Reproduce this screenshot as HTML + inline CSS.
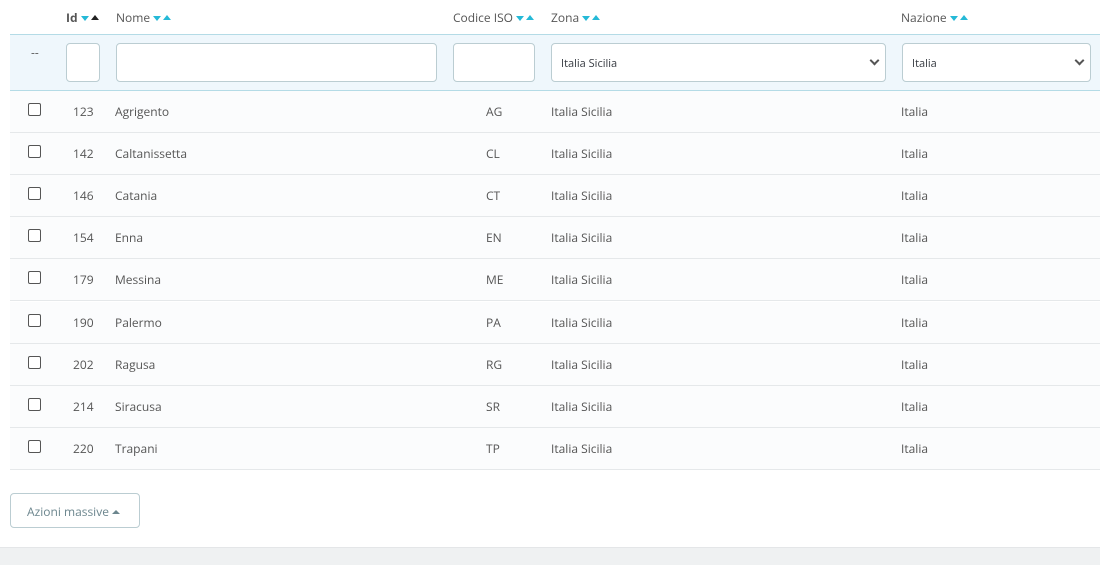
<!DOCTYPE html>
<html><head><style>
*{margin:0;padding:0;box-sizing:border-box}
body{width:1100px;height:565px;background:#fff;font-family:"Open Sans","Liberation Sans",sans-serif;font-size:12px;color:#555;position:relative;overflow:hidden}
.a{position:absolute}
.h{top:9px;font-size:12px;color:#555}
.dn{display:inline-block;width:0;height:0;border-left:4px solid transparent;border-right:4px solid transparent;border-top:5px solid #25b9d7;vertical-align:1px;margin-left:3px}
.up{display:inline-block;width:0;height:0;border-left:4px solid transparent;border-right:4px solid transparent;border-bottom:5px solid #25b9d7;vertical-align:2px;margin-left:2px}
.filt{left:10px;top:34px;width:1090px;height:57px;background:#eff7fc;border-top:1px solid #b4dbe6;border-bottom:1px solid #b4dbe6}
.in{top:43px;height:39px;background:#fff;border:1px solid #bbcdd2;border-radius:4px}
.sel{font-size:11px;color:#363a41;padding:12px 0 0 9px}
.chev{position:absolute;right:7px;top:13px;width:7px;height:7px;border-right:2px solid #555;border-bottom:2px solid #555;transform:rotate(45deg)}
.row{left:10px;width:1090px;height:42px;background:#fbfcfd;border-bottom:1px solid #e5e8ea}
.row span{position:absolute;top:12px}
.cb{position:absolute;left:18px;top:12px;width:13px;height:13px;border:1px solid #555;border-radius:2px;background:#fff}
</style></head><body>
<div class="a h" style="left:66px;font-weight:bold">Id<span class="dn"></span><span class="up" style="border-bottom-color:#222"></span></div>
<div class="a h" style="left:116px">Nome<span class="dn"></span><span class="up"></span></div>
<div class="a h" style="left:453px">Codice ISO<span class="dn"></span><span class="up"></span></div>
<div class="a h" style="left:551px">Zona<span class="dn"></span><span class="up"></span></div>
<div class="a h" style="left:901px">Nazione<span class="dn"></span><span class="up"></span></div>
<div class="a filt"></div>
<div class="a" style="left:31px;top:44px;color:#555">--</div>
<div class="a in" style="left:66px;width:34px"></div>
<div class="a in" style="left:116px;width:321px"></div>
<div class="a in" style="left:453px;width:82px"></div>
<div class="a in sel" style="left:551px;width:335px">Italia Sicilia<div class="chev"></div></div>
<div class="a in sel" style="left:902px;width:189px">Italia<div class="chev"></div></div>
<div id="rows"></div>
<div class="a" style="left:10px;top:493px;width:130px;height:35px;border:1px solid #bbcdd2;border-radius:4px;color:#6c868e;font-size:12px;padding:9px 0 0 16px">Azioni massive <span style="display:inline-block;border-left:4px solid transparent;border-right:4px solid transparent;border-bottom:4px solid #6c868e;vertical-align:2px"></span></div>
<div class="a" style="left:0;top:547px;width:1100px;height:18px;background:#eff1f2;border-top:1px solid #e4e6e8"></div>
<script>
var d=[["123","Agrigento","AG"],["142","Caltanissetta","CL"],["146","Catania","CT"],["154","Enna","EN"],["179","Messina","ME"],["190","Palermo","PA"],["202","Ragusa","RG"],["214","Siracusa","SR"],["220","Trapani","TP"]];
var h="";d.forEach(function(r,i){var t=91+i*42.1;
h+='<div class="a row" style="top:'+t+'px"><div class="cb"></div><span style="left:63px">'+r[0]+'</span><span style="left:105px">'+r[1]+'</span><span style="left:476px">'+r[2]+'</span><span style="left:541px">Italia Sicilia</span><span style="left:891px">Italia</span></div>';});
document.getElementById("rows").innerHTML=h;
</script>
</body></html>
